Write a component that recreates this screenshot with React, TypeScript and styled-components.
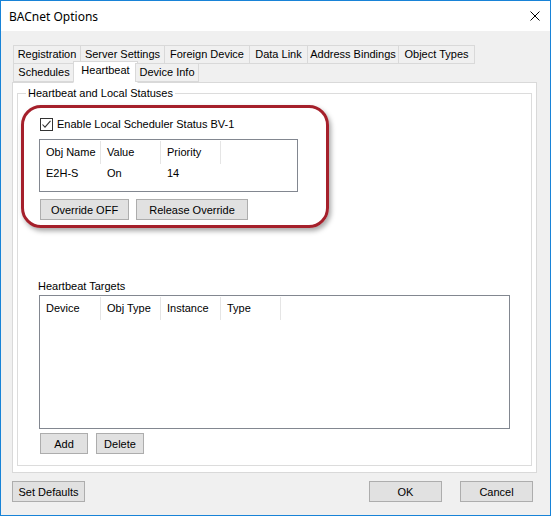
import React from "react";
import styled, { createGlobalStyle } from "styled-components";

const GlobalStyle = createGlobalStyle`
  html, body {
    margin: 0;
    padding: 0;
    background: #ffffff;
  }
  body {
    font-family: "Liberation Sans", Arial, sans-serif;
    font-size: 11px;
    color: #000000;
  }
  * {
    box-sizing: border-box;
  }
`;

const Window = styled.div`
  width: 551px;
  height: 516px;
  border: 1px solid #1883d7;
  display: flex;
  flex-direction: column;
  background: #f0f0f0;
`;

const TitleBar = styled.div`
  height: 30px;
  flex: none;
  background: #ffffff;
  display: flex;
  align-items: center;
  justify-content: space-between;
  padding: 0 10px 0 8px;
  font-family: "Noto Sans", "Open Sans", sans-serif;
  font-size: 12px;
  color: #000000;
`;

const Body = styled.div`
  flex: 1;
  display: flex;
  flex-direction: column;
  padding: 14px 13px 13px 11px;
`;

const TabStrip = styled.div`
  display: flex;
  flex-direction: column;
  padding-left: 1px;
  margin-bottom: -1px;
  position: relative;
  z-index: 1;
`;

const TabRow = styled.div`
  display: flex;
  align-items: flex-start;
  & + & {
    margin-top: -1px;
  }
`;

const Tab = styled.div<{ $width: number; $active?: boolean }>`
  width: ${(p) => (p.$active ? p.$width + 3 : p.$width)}px;
  height: ${(p) => (p.$active ? 22 : 19)}px;
  margin-top: ${(p) => (p.$active ? -2 : 0)}px;
  margin-left: ${(p) => (p.$active ? -2 : -1)}px;
  margin-right: ${(p) => (p.$active ? -2 : 0)}px;
  border: 1px solid #d9d9d9;
  border-bottom-color: ${(p) => (p.$active ? "transparent" : "#d9d9d9")};
  background: ${(p) => (p.$active ? "#ffffff" : "#f0f0f0")};
  display: flex;
  align-items: center;
  justify-content: center;
  padding-bottom: ${(p) => (p.$active ? 3 : 0)}px;
  font-size: 11px;
  line-height: 13px;
  white-space: nowrap;
  &:first-child {
    margin-left: 0;
  }
`;

const Panel = styled.div`
  border: 1px solid #d9d9d9;
  background: #ffffff;
  padding: 4px 4px 6px 4px;
`;

const GroupBox = styled.fieldset`
  margin: 0;
  min-width: 0;
  border: 1px solid #dcdcdc;
  padding: 0 0 11px 3px;
`;

const GroupLegend = styled.legend`
  margin-left: 5px;
  padding: 0 2px;
  font-size: 11px;
  line-height: 13px;
`;

const Highlight = styled.div`
  width: 308px;
  margin-top: 5px;
  border: 3px solid #a5202b;
  border-radius: 20px;
  box-shadow: 2px 3px 5px rgba(0, 0, 0, 0.35);
  padding: 10px 0 5px 15px;
`;

const CheckRow = styled.label`
  display: flex;
  align-items: center;
  gap: 4px;
  height: 13px;
  margin-left: 1px;
  font-size: 11px;
  line-height: 13px;
`;

const CheckBox = styled.span`
  width: 13px;
  height: 13px;
  flex: none;
  border: 1px solid #333333;
  background: #ffffff;
  display: flex;
`;

const ListView = styled.div<{ $width: number; $height: number; $top?: number }>`
  width: ${(p) => p.$width}px;
  height: ${(p) => p.$height}px;
  margin-top: ${(p) => p.$top ?? 0}px;
  border: 1px solid #828790;
  background: #ffffff;
  display: flex;
  flex-direction: column;
`;

const HeaderRow = styled.div`
  display: flex;
  height: 24px;
`;

const HeaderCell = styled.div<{ $width: number }>`
  width: ${(p) => p.$width}px;
  margin-top: 1px;
  border-right: 1px solid #e5e5e5;
  padding-left: 6px;
  display: flex;
  align-items: center;
  padding-bottom: 1px;
  white-space: nowrap;
`;

const DataRow = styled.div`
  display: flex;
  height: 17px;
`;

const DataCell = styled.div<{ $width: number }>`
  width: ${(p) => p.$width}px;
  padding: 1px 0 0 6px;
  line-height: 17px;
  white-space: nowrap;
`;

const ButtonRow = styled.div<{ $gap: number; $top: number }>`
  display: flex;
  gap: ${(p) => p.$gap}px;
  margin-top: ${(p) => p.$top}px;
  margin-left: 1px;
`;

const Button = styled.button<{ $width: number }>`
  width: ${(p) => p.$width}px;
  height: 21px;
  padding: 0;
  background: #e1e1e1;
  border: 1px solid #adadad;
  font-family: "Liberation Sans", Arial, sans-serif;
  font-size: 11px;
  color: #000000;
`;

const Targets = styled.div`
  margin-top: 52px;
  padding: 0 21px 0 18px;
`;

const TargetsLabel = styled.div`
  height: 13px;
  line-height: 13px;
  margin: 0 0 2px -1px;
`;

const Footer = styled.div`
  display: flex;
  gap: 18px;
  margin-top: 8px;
  padding-right: 4px;
  & > :first-child {
    margin-right: auto;
  }
`;

const CloseIcon = () => (
  <svg width="10" height="10" viewBox="0 0 10 10">
    <path d="M0.5 0.5 L9.5 9.5 M9.5 0.5 L0.5 9.5" stroke="#000" strokeWidth="1" />
  </svg>
);

const CheckMark = () => (
  <svg width="11" height="11" viewBox="0 0 11 11">
    <path d="M1.5 5.5 L4 8.2 L9.5 1.8" fill="none" stroke="#333" strokeWidth="1.1" />
  </svg>
);

const topTabs = [
  { label: "Registration", width: 68 },
  { label: "Server Settings", width: 85 },
  { label: "Foreign Device", width: 86 },
  { label: "Data Link", width: 59 },
  { label: "Address Bindings", width: 92 },
  { label: "Object Types", width: 77 },
];

const bottomTabs = [
  { label: "Schedules", width: 62 },
  { label: "Heartbeat", width: 62, active: true },
  { label: "Device Info", width: 64 },
];

const statusCols = [
  { label: "Obj Name", width: 61 },
  { label: "Value", width: 60 },
  { label: "Priority", width: 60 },
];

const statusRows = [["E2H-S", "On", "14"]];

const targetCols = [
  { label: "Device", width: 61 },
  { label: "Obj Type", width: 60 },
  { label: "Instance", width: 60 },
  { label: "Type", width: 60 },
];

export default function App() {
  return (
    <>
      <GlobalStyle />
      <Window>
        <TitleBar>
          <span>BACnet Options</span>
          <CloseIcon />
        </TitleBar>
        <Body>
          <TabStrip>
            <TabRow>
              {topTabs.map((t) => (
                <Tab key={t.label} $width={t.width}>
                  {t.label}
                </Tab>
              ))}
            </TabRow>
            <TabRow>
              {bottomTabs.map((t) => (
                <Tab key={t.label} $width={t.width} $active={t.active}>
                  {t.label}
                </Tab>
              ))}
            </TabRow>
          </TabStrip>
          <Panel>
            <GroupBox>
              <GroupLegend>Heartbeat and Local Statuses</GroupLegend>
              <Highlight>
                <CheckRow>
                  <CheckBox>
                    <CheckMark />
                  </CheckBox>
                  Enable Local Scheduler Status BV-1
                </CheckRow>
                <ListView $width={259} $height={53} $top={8}>
                  <HeaderRow>
                    {statusCols.map((c) => (
                      <HeaderCell key={c.label} $width={c.width}>
                        {c.label}
                      </HeaderCell>
                    ))}
                  </HeaderRow>
                  {statusRows.map((r) => (
                    <DataRow key={r[0]}>
                      {r.map((v, i) => (
                        <DataCell key={i} $width={statusCols[i].width}>
                          {v}
                        </DataCell>
                      ))}
                    </DataRow>
                  ))}
                </ListView>
                <ButtonRow $gap={7} $top={7}>
                  <Button $width={89}>Override OFF</Button>
                  <Button $width={112}>Release Override</Button>
                </ButtonRow>
              </Highlight>
              <Targets>
                <TargetsLabel>Heartbeat Targets</TargetsLabel>
                <ListView $width={471} $height={134}>
                  <HeaderRow>
                    {targetCols.map((c) => (
                      <HeaderCell key={c.label} $width={c.width}>
                        {c.label}
                      </HeaderCell>
                    ))}
                  </HeaderRow>
                </ListView>
                <ButtonRow $gap={8} $top={4}>
                  <Button $width={48}>Add</Button>
                  <Button $width={48}>Delete</Button>
                </ButtonRow>
              </Targets>
            </GroupBox>
          </Panel>
          <Footer>
            <Button $width={73}>Set Defaults</Button>
            <Button $width={73}>OK</Button>
            <Button $width={73}>Cancel</Button>
          </Footer>
        </Body>
      </Window>
    </>
  );
}
